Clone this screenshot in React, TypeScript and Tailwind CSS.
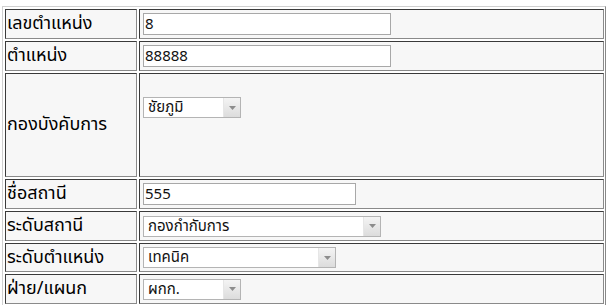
import React from "react";

const font = { fontFamily: '"Noto Sans Thai", Tahoma, "Noto Sans", "DejaVu Sans", sans-serif' };

function Label({ text }: { text: string }) {
  return (
    <div className="flex items-center border border-t-[#3a3a3a] border-l-[#3a3a3a] border-b-[#8a8a8a] border-r-[#8a8a8a] bg-[#f7f7f7] pl-[1px] text-[18px] text-black leading-none">
      {text}
    </div>
  );
}

function Value({ children, top }: { children: React.ReactNode; top?: boolean }) {
  return (
    <div
      className={
        "flex border border-t-[#3a3a3a] border-l-[#3a3a3a] border-b-[#8a8a8a] border-r-[#8a8a8a] bg-[#f7f7f7] pl-[3px] " +
        (top ? "items-start pt-[23px]" : "items-center")
      }
    >
      {children}
    </div>
  );
}

function TextBox({ value, w }: { value: string; w: string }) {
  return (
    <div
      className={
        "flex h-[22px] items-center border border-[#a8a8a8] bg-white pl-[1px] text-[15px] text-[#111] leading-none " + w
      }
    >
      {value}
    </div>
  );
}

function SelectBox({ value, w }: { value: string; w: string }) {
  return (
    <div className={"flex h-[21px] items-stretch border border-[#b4b4b4] bg-white " + w}>
      <div className="flex flex-1 items-center pl-[4px] text-[15px] text-[#111] leading-none">{value}</div>
      <div className="flex w-[17px] items-center justify-center border-l border-[#e6e6e6] bg-gradient-to-b from-[#f4f4f4] to-[#dcdcdc]">
        <svg width="7" height="4" viewBox="0 0 7 4">
          <path d="M0 0 L7 0 L3.5 4 Z" fill="#8c8c8c" />
        </svg>
      </div>
    </div>
  );
}

export default function App() {
  return (
    <div className="h-[305px] w-[608px] bg-white pl-[2px] pt-[6px]" style={font}>
      <div className="grid w-[604px] grid-cols-[132px_465px] grid-rows-[30px_30px_104px_30px_30px_29px_30px] gap-[2px] border border-t-[#d0d0d0] border-l-[#d0d0d0] border-b-[#888] border-r-[#888] p-[2px]">
        <Label text="เลขตำแหน่ง" />
        <Value>
          <TextBox value="8" w="w-[248px]" />
        </Value>
        <Label text="ตำแหน่ง" />
        <Value>
          <TextBox value="88888" w="w-[248px]" />
        </Value>
        <Label text="กองบังคับการ" />
        <Value top>
          <SelectBox value="ชัยภูมิ" w="w-[98px]" />
        </Value>
        <Label text="ชื่อสถานี" />
        <Value>
          <TextBox value="555" w="w-[213px]" />
        </Value>
        <Label text="ระดับสถานี" />
        <Value>
          <SelectBox value="กองกำกับการ" w="w-[238px]" />
        </Value>
        <Label text="ระดับตำแหน่ง" />
        <Value>
          <SelectBox value="เทคนิค" w="w-[193px]" />
        </Value>
        <Label text="ฝ่าย/แผนก" />
        <Value>
          <SelectBox value="ผกก." w="w-[98px]" />
        </Value>
      </div>
    </div>
  );
}
